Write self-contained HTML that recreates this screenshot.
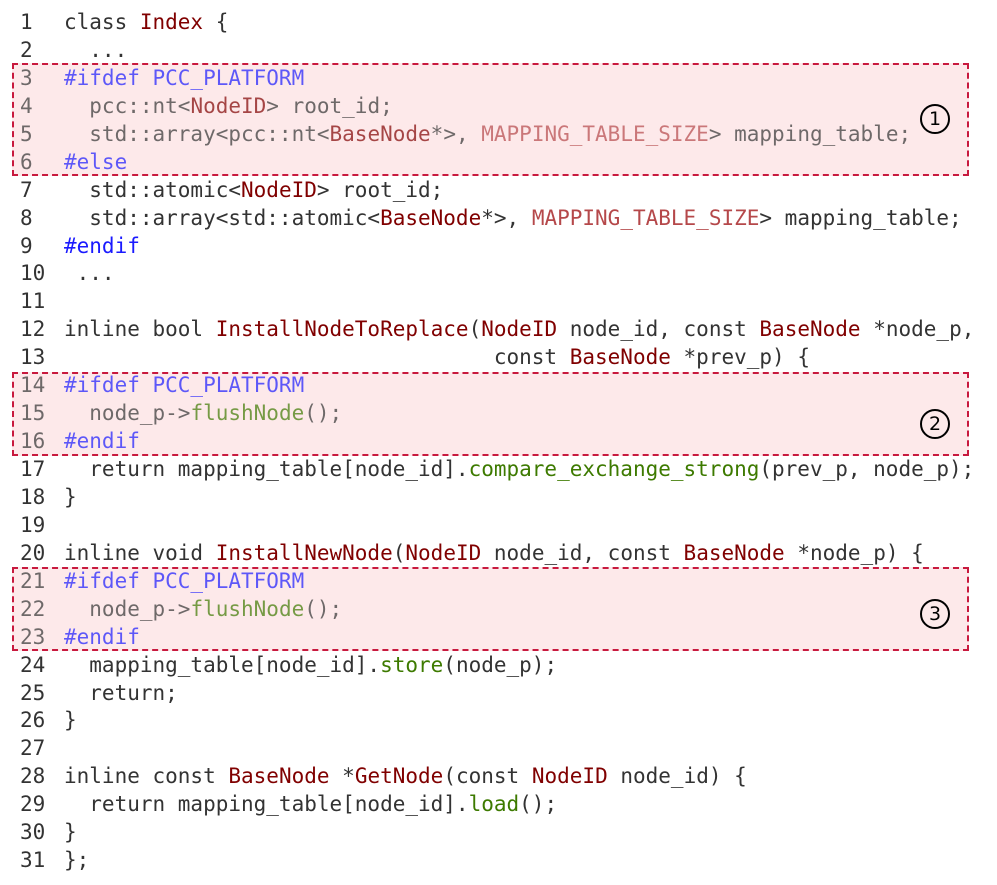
<!DOCTYPE html>
<html><head><style>
body{margin:0;background:#fff;width:997px;height:885px;position:relative;overflow:hidden}
pre{margin:0;position:absolute;left:0;top:9px;font-family:"DejaVu Sans Mono","Liberation Mono",monospace;font-size:21px;line-height:27.93px;color:#333;z-index:2}
.n{display:inline-block;width:64px;padding-left:20px;box-sizing:border-box}
.t{color:#800000}.g{color:#3d7a00}.m{color:#b5484a}.b{color:#1a1aff}
.f{opacity:.7}
.box{position:absolute;left:12px;width:957px;background:#fde9ea;border:2px dashed #c8193e;box-sizing:border-box;z-index:1}
.c{position:absolute;left:920px;width:30px;height:30px;border:2px solid #000;border-radius:50%;box-sizing:border-box;font:19px "DejaVu Sans",sans-serif;text-align:center;line-height:26px;z-index:3}
</style></head><body>
<div class="box" style="top:63px;height:113px"></div>
<div class="box" style="top:372px;height:84px"></div>
<div class="box" style="top:567px;height:84px"></div>
<div class="c" style="top:104px">1</div>
<div class="c" style="top:409px">2</div>
<div class="c" style="top:599px">3</div>
<pre><span class="n">1</span>class <span class="t">Index</span> {
<span class="n">2</span>  ...
<span class="f"><span class="n">3</span><span class="b">#ifdef PCC_PLATFORM</span></span>
<span class="f"><span class="n">4</span>  pcc::nt&lt;<span class="t">NodeID</span>&gt; root_id;</span>
<span class="f"><span class="n">5</span>  std::array&lt;pcc::nt&lt;<span class="t">BaseNode</span>*&gt;, <span class="m">MAPPING_TABLE_SIZE</span>&gt; mapping_table;</span>
<span class="f"><span class="n">6</span><span class="b">#else</span></span>
<span class="n">7</span>  std::atomic&lt;<span class="t">NodeID</span>&gt; root_id;
<span class="n">8</span>  std::array&lt;std::atomic&lt;<span class="t">BaseNode</span>*&gt;, <span class="m">MAPPING_TABLE_SIZE</span>&gt; mapping_table;
<span class="n">9</span><span class="b">#endif</span>
<span class="n">10</span> ...
<span class="n">11</span>
<span class="n">12</span>inline bool <span class="t">InstallNodeToReplace</span>(<span class="t">NodeID</span> node_id, const <span class="t">BaseNode</span> *node_p,
<span class="n">13</span>                                  const <span class="t">BaseNode</span> *prev_p) {
<span class="f"><span class="n">14</span><span class="b">#ifdef PCC_PLATFORM</span></span>
<span class="f"><span class="n">15</span>  node_p-&gt;<span class="g">flushNode</span>();</span>
<span class="f"><span class="n">16</span><span class="b">#endif</span></span>
<span class="n">17</span>  return mapping_table[node_id].<span class="g">compare_exchange_strong</span>(prev_p, node_p);
<span class="n">18</span>}
<span class="n">19</span>
<span class="n">20</span>inline void <span class="t">InstallNewNode</span>(<span class="t">NodeID</span> node_id, const <span class="t">BaseNode</span> *node_p) {
<span class="f"><span class="n">21</span><span class="b">#ifdef PCC_PLATFORM</span></span>
<span class="f"><span class="n">22</span>  node_p-&gt;<span class="g">flushNode</span>();</span>
<span class="f"><span class="n">23</span><span class="b">#endif</span></span>
<span class="n">24</span>  mapping_table[node_id].<span class="g">store</span>(node_p);
<span class="n">25</span>  return;
<span class="n">26</span>}
<span class="n">27</span>
<span class="n">28</span>inline const <span class="t">BaseNode</span> *<span class="t">GetNode</span>(const <span class="t">NodeID</span> node_id) {
<span class="n">29</span>  return mapping_table[node_id].<span class="g">load</span>();
<span class="n">30</span>}
<span class="n">31</span>};</pre>
</body></html>
